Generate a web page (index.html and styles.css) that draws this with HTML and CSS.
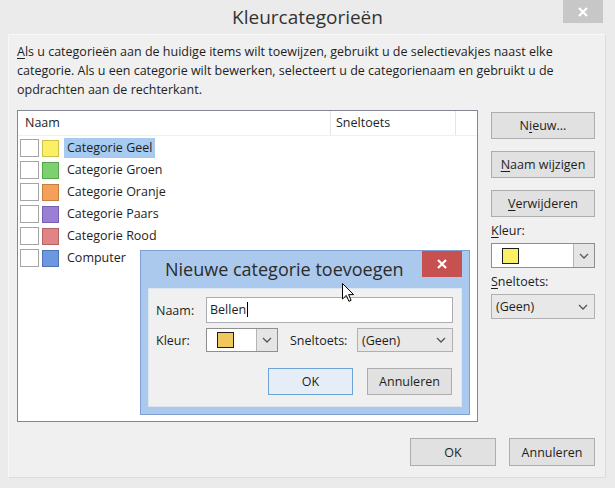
FILE: index.html
```html
<!DOCTYPE html>
<html lang="nl">
<head>
    <meta charset="UTF-8">
    <title>Kleurcategorieën</title>
    <link rel="stylesheet" href="styles.css">
</head>
<body>
    <div class="window">
        <div class="titlebar">
            <span></span>
            <h1 class="title">Kleurcategorieën</h1>
            <button class="close">
                <svg width="10" height="10" viewBox="0 0 10 10"><path d="M1 1L9 9M9 1L1 9" stroke="#fff" stroke-width="2.2"/></svg>
            </button>
        </div>

        <div class="panel">
            <p class="intro"><u>A</u>ls u categorieën aan de huidige items wilt toewijzen, gebruikt u de selectievakjes naast elke<br>categorie. Als u een categorie wilt bewerken, selecteert u de categorienaam en gebruikt u de<br>opdrachten aan de rechterkant.</p>

            <div class="main">
                <div class="list">
                    <div class="list-head">
                        <div class="col-name">Naam</div>
                        <div class="col-key">Sneltoets</div>
                        <div class="col-rest"></div>
                    </div>
                    <div class="rows">
                        <div class="row"><span class="check"></span><span class="swatch geel"></span><span class="row-label selected">Categorie Geel</span></div>
                        <div class="row"><span class="check"></span><span class="swatch groen"></span><span class="row-label">Categorie Groen</span></div>
                        <div class="row"><span class="check"></span><span class="swatch oranje"></span><span class="row-label">Categorie Oranje</span></div>
                        <div class="row"><span class="check"></span><span class="swatch paars"></span><span class="row-label">Categorie Paars</span></div>
                        <div class="row"><span class="check"></span><span class="swatch rood"></span><span class="row-label">Categorie Rood</span></div>
                        <div class="row"><span class="check"></span><span class="swatch blauw"></span><span class="row-label">Computer</span></div>
                    </div>
                </div>

                <div class="side">
                    <button class="btn">N<u>i</u>euw...</button>
                    <button class="btn"><u>N</u>aam wijzigen</button>
                    <button class="btn"><u>V</u>erwijderen</button>
                    <div class="field-label"><u>K</u>leur:</div>
                    <div class="combo">
                        <span class="cswatch geel"></span>
                        <span class="drop">
                            <svg width="10" height="6" viewBox="0 0 10 6"><path d="M1 1L5 5L9 1" fill="none" stroke="#555" stroke-width="1.3"/></svg>
                        </span>
                    </div>
                    <div class="field-label"><u>S</u>neltoets:</div>
                    <div class="combo select">
                        <span>(Geen)</span>
                        <svg width="10" height="6" viewBox="0 0 10 6"><path d="M1 1L5 5L9 1" fill="none" stroke="#555" stroke-width="1.3"/></svg>
                    </div>
                </div>
            </div>

            <div class="footer">
                <button class="btn">OK</button>
                <button class="btn">Annuleren</button>
            </div>
        </div>

        <div class="modal">
            <div class="modal-bar">
                <div class="modal-title">Nieuwe categorie toevoegen</div>
                <button class="modal-close">
                    <svg width="10" height="10" viewBox="0 0 10 10"><path d="M1 1L9 9M9 1L1 9" stroke="#fff" stroke-width="2.2"/></svg>
                </button>
            </div>
            <div class="modal-body">
                <div class="mrow">
                    <span class="mlabel">Naam:</span>
                    <div class="input">Bellen<span class="caret"></span></div>
                </div>
                <div class="mrow second">
                    <span class="mlabel">Kleur:</span>
                    <div class="combo small">
                        <span class="cswatch goud"></span>
                        <span class="drop">
                            <svg width="10" height="6" viewBox="0 0 10 6"><path d="M1 1L5 5L9 1" fill="none" stroke="#555" stroke-width="1.3"/></svg>
                        </span>
                    </div>
                    <span class="mlabel key">Sneltoets:</span>
                    <div class="combo select key-select">
                        <span>(Geen)</span>
                        <svg width="10" height="6" viewBox="0 0 10 6"><path d="M1 1L5 5L9 1" fill="none" stroke="#555" stroke-width="1.3"/></svg>
                    </div>
                </div>
                <div class="mbuttons">
                    <button class="btn default">OK</button>
                    <button class="btn">Annuleren</button>
                </div>
            </div>
        </div>

        <svg class="pointer" width="13" height="20" viewBox="0 0 13 20">
            <path d="M0.5 0.5L0.5 16L4.3 12.4L6.9 18.3L9.1 17.3L6.6 11.6L11.6 11.6Z" fill="#fff" stroke="#000" stroke-width="1"/>
        </svg>
    </div>
</body>
</html>
```

FILE: styles.css
```css
* {
    margin: 0;
    padding: 0;
    box-sizing: border-box;
}

body {
    width: 615px;
    height: 488px;
    overflow: hidden;
    background: #ebebeb;
    font-family: 'Open Sans', sans-serif;
    font-size: 12.5px;
    color: #1e1e1e;
}

u {
    text-decoration: underline;
    text-underline-offset: 2px;
}

.window {
    position: relative;
    height: 488px;
    display: flex;
    flex-direction: column;
}

/* title bar */
.titlebar {
    height: 34px;
    display: grid;
    grid-template-columns: 1fr auto 1fr;
}

.title {
    font-size: 19px;
    font-weight: normal;
    line-height: 34px;
    color: #333;
}

.close {
    justify-self: end;
    width: 40px;
    height: 23px;
    margin-right: 12px;
    border: none;
    background: #c7c7c7;
    display: flex;
    align-items: center;
    justify-content: center;
}

/* main panel */
.panel {
    height: 444px;
    margin: 0 9px 0 8px;
    padding: 7px 10px 0 8px;
    background: #f0f0f0;
    border: 1px solid #dcdcdc;
    border-top-color: #f8f8f8;
    border-left-color: #f8f8f8;
    display: flex;
    flex-direction: column;
}

.intro {
    line-height: 19px;
}

.main {
    display: flex;
    gap: 13px;
    margin-top: 11px;
}

.list {
    width: 461px;
    height: 312px;
    background: #fff;
    border: 1px solid #828790;
}

.list-head {
    display: flex;
    height: 25px;
    border-bottom: 1px solid #f0f0f0;
}

.list-head div {
    line-height: 24px;
    border-right: 1px solid #e5e5e5;
}

.col-name {
    width: 313px;
    padding-left: 7px;
}

.col-key {
    width: 125px;
    padding-left: 5px;
}

.col-rest {
    flex: 1;
    border-right: none !important;
}

.rows {
    padding-top: 1px;
}

.row {
    display: flex;
    align-items: center;
    height: 22px;
    padding-left: 2px;
}

.check {
    width: 19px;
    height: 18px;
    background: #fff;
    border: 1px solid #a5a5a5;
}

.swatch {
    width: 17px;
    height: 17px;
    margin-left: 3px;
    border: 1px solid;
}

.row-label {
    margin-left: 5px;
    padding: 0 3px;
    line-height: 20px;
}

.selected {
    background: #a6caf0;
}

.geel { background: #fbf065; border-color: #cdc245; }
.groen { background: #7dd06f; border-color: #58a64b; }
.oranje { background: #f5a05a; border-color: #c67f41; }
.paars { background: #9b7fd7; border-color: #7560b0; }
.rood { background: #e08585; border-color: #b66262; }
.blauw { background: #6b98e0; border-color: #4d72b6; }
.goud { background: #f0c75c; border-color: #c29d42; }

/* right column */
.side {
    width: 104px;
    padding-top: 2px;
    display: flex;
    flex-direction: column;
}

.btn {
    height: 27px;
    background: #e1e1e1;
    border: 1px solid #adadad;
    font-family: inherit;
    font-size: 12.5px;
    color: #1e1e1e;
}

.side .btn {
    margin-bottom: 12px;
}

.side .btn:nth-child(3) {
    margin-bottom: 0;
}

.field-label {
    line-height: 18px;
    margin: 5px 0 3px;
}

.combo {
    height: 25px;
    background: #fff;
    border: 1px solid #8f8f8f;
    display: flex;
    align-items: center;
}

.cswatch {
    width: 17px;
    height: 16px;
    margin-left: 10px;
    border: 1px solid;
}

.drop {
    margin-left: auto;
    width: 21px;
    height: 100%;
    background: #e5e5e5;
    border-left: 1px solid #b5b5b5;
    display: flex;
    align-items: center;
    justify-content: center;
}

.select {
    justify-content: space-between;
    padding: 0 6px 0 4px;
    background: #e8e8e8;
    border-color: #b0b0b0;
}

.footer {
    display: flex;
    justify-content: flex-end;
    gap: 13px;
    margin-top: 16px;
}

.footer .btn {
    width: 86px;
    height: 28px;
}

/* add-category dialog */
.modal {
    position: absolute;
    left: 140px;
    top: 250px;
    width: 330px;
    height: 165px;
    padding: 0 7px 7px;
    background: #abc9ed;
    border: 1px solid #7f9fd0;
    display: flex;
    flex-direction: column;
}

.modal-bar {
    height: 37px;
    display: flex;
    justify-content: space-between;
}

.modal-title {
    padding-left: 17px;
    font-size: 18px;
    line-height: 36px;
    color: #2b2b2b;
}

.modal-close {
    width: 40px;
    height: 26px;
    border: none;
    background: #c75050;
    display: flex;
    align-items: center;
    justify-content: center;
}

.modal-body {
    flex: 1;
    padding: 8px 8px 0 7px;
    background: #f0f0f0;
    border: 1px solid #dde5ef;
}

.mrow {
    display: flex;
    align-items: center;
}

.mrow.second {
    margin-top: 5px;
}

.mlabel {
    width: 50px;
}

.mlabel.key {
    width: 67px;
    margin-left: 12px;
}

.input {
    width: 247px;
    height: 26px;
    padding-left: 3px;
    line-height: 24px;
    background: #fff;
    border: 1px solid #abadb3;
}

.caret {
    display: inline-block;
    width: 1px;
    height: 15px;
    margin-left: 1px;
    vertical-align: -3px;
    background: #000;
}

.combo.small {
    width: 72px;
    height: 24px;
}

.key-select {
    width: 96px;
    height: 24px;
}

.mbuttons {
    display: flex;
    justify-content: flex-end;
    gap: 14px;
    margin: 16px 1px 0 0;
}

.mbuttons .btn {
    width: 85px;
}

.btn.default {
    background: #e5edf6;
    border-color: #6ea3d8;
}

.pointer {
    position: absolute;
    left: 342px;
    top: 283px;
}
```
